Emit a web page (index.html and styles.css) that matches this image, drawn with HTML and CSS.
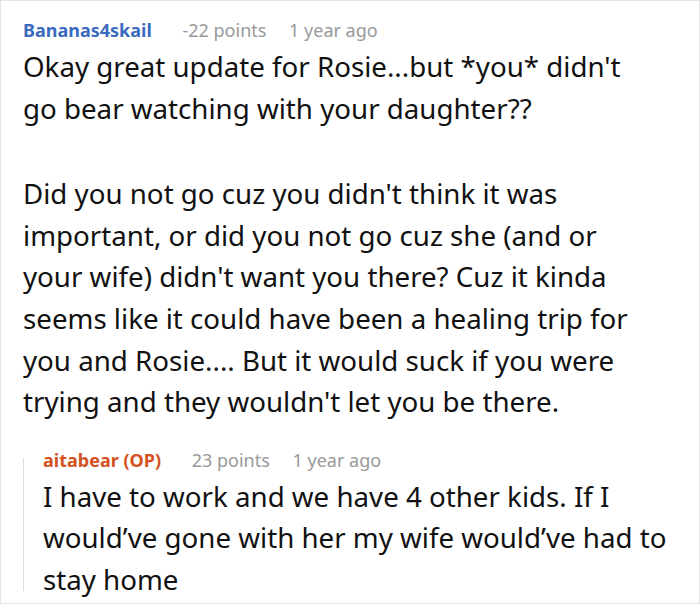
FILE: index.html
```html
<!DOCTYPE html>
<html>
<head>
<meta charset="utf-8">
<link rel="stylesheet" href="styles.css">
</head>
<body>
<div class="frame">
  <div class="comment">
    <div class="meta">
      <span class="user user-blue">Bananas4skail</span>
      <span class="points">-22 points</span>
      <span class="time">1 year ago</span>
    </div>
    <p class="text">Okay great update for Rosie...but *you* didn't go bear watching with your daughter??</p>
    <p class="text">Did you not go cuz you didn't think it was important, or did you not go cuz she (and or your wife) didn't want you there? Cuz it kinda seems like it could have been a healing trip for you and Rosie.... But it would suck if you were trying and they wouldn't let you be there.</p>
    <div class="reply">
      <div class="meta">
        <span class="user user-op">aitabear (OP)</span>
        <span class="points">23 points</span>
        <span class="time">1 year ago</span>
      </div>
      <p class="text reply-text">I have to work and we have 4 other kids. If I would’ve gone with her my wife would’ve had to stay home</p>
    </div>
  </div>
</div>
</body>
</html>
```
FILE: styles.css
```css
html, body {
  margin: 0;
  padding: 0;
  background: #ffffff;
}
.frame {
  width: 700px;
  height: 604px;
  box-sizing: border-box;
  border: 1px solid #e3e3e3;
  overflow: hidden;
  font-family: "Noto Sans", "Open Sans", sans-serif;
  color: #111111;
}
.comment {
  padding: 16px 0 0 22px;
}
.meta {
  font-size: 18px;
  line-height: 26px;
  height: 26px;
  white-space: nowrap;
}
.user {
  font-weight: bold;
  margin-right: 26px;
}
.user-blue { color: #3a6bbf; }
.user-op { color: #d4521f; }
.points {
  color: #999999;
  margin-right: 18px;
}
.time { color: #999999; }
.text {
  width: 630px;
  font-size: 27.7px;
  line-height: 41.6px;
  margin: 3px 0 44px 0;
}
.reply {
  position: relative;
  margin-top: -20px;
  padding-left: 20px;
}
.reply::before {
  content: "";
  position: absolute;
  left: 0;
  top: 11px;
  bottom: 10px;
  width: 1px;
  background: #dddddd;
}
.reply-text {
  margin-bottom: 0;
}
```
